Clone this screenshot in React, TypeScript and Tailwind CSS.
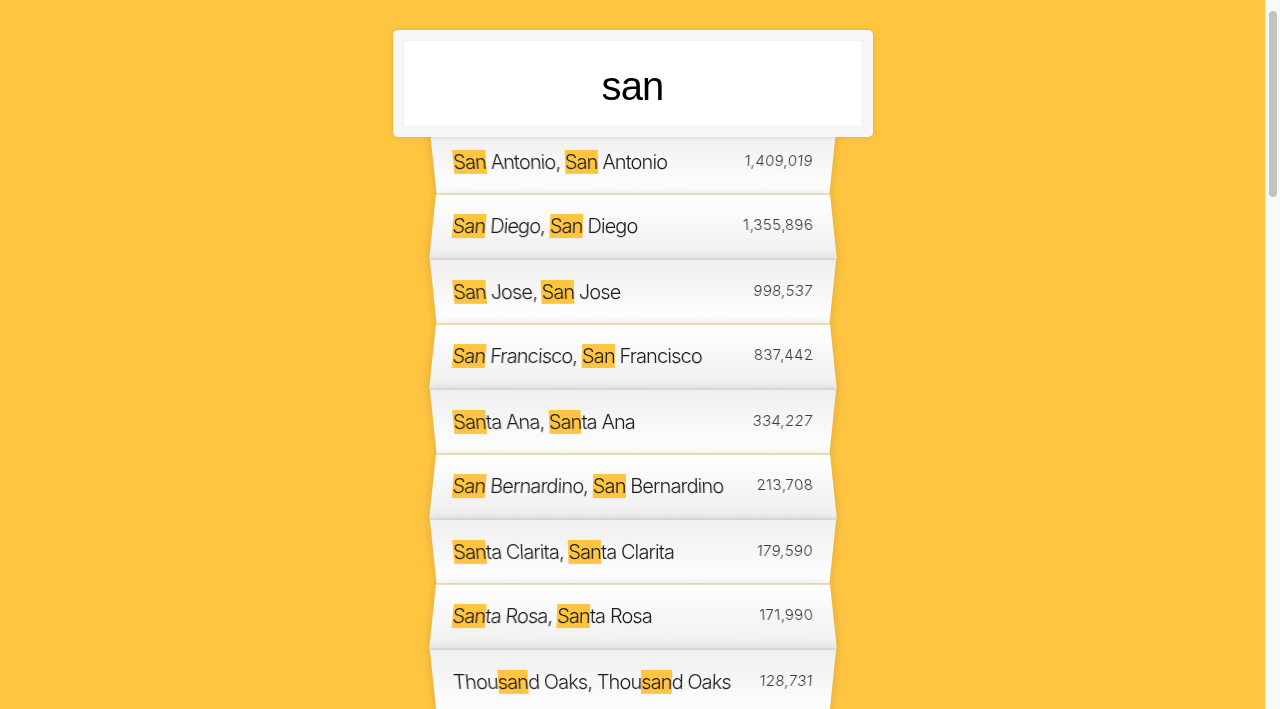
import { Fragment } from "react";

const cities: [string, string][] = [
  ["San Antonio", "1,409,019"],
  ["San Diego", "1,355,896"],
  ["San Jose", "998,537"],
  ["San Francisco", "837,442"],
  ["Santa Ana", "334,227"],
  ["San Bernardino", "213,708"],
  ["Santa Clarita", "179,590"],
  ["Santa Rosa", "171,990"],
  ["Thousand Oaks", "128,731"],
  ["Santa Clara", "120,245"],
  ["Santa Maria", "102,216"],
  ["San Mateo", "101,128"],
];

// wraps every "san" in a highlight span
function Highlight({ text }: { text: string }) {
  const parts = text.split(/(san)/gi);
  return (
    <>
      {parts.map((p, i) =>
        p.toLowerCase() === "san" ? (
          <span key={i} className="bg-[#ffc541]">
            {p}
          </span>
        ) : (
          <Fragment key={i}>{p}</Fragment>
        )
      )}
    </>
  );
}

export default function App() {
  return (
    <div className="flex h-screen overflow-hidden">
      <main className="flex-1 overflow-hidden bg-[#ffc541] font-['Helvetica_Neue',Inter,sans-serif] font-light text-[20px] text-[#1a1a1a]">
        <form className="max-w-[400px] mx-auto pt-[30px] pb-[50px]">
          <input
            type="text"
            readOnly
            value="san"
            className="relative z-10 block w-[480px] -ml-10 -mb-[10px] px-5 pt-[23px] pb-[17px] leading-[47px] text-center text-[40px] font-normal text-black tracking-[-0.02em] font-['Liberation_Sans',Arial,sans-serif] bg-white border-[10px] border-[#f7f7f7] rounded-[5px] outline-none shadow-[0_0_5px_rgba(0,0,0,0.12),inset_0_0_2px_rgba(0,0,0,0.19)]"
          />
          <ul className="relative m-0 p-0">
            {cities.map(([name, pop], i) => (
              <li
                key={name}
                className={`flex justify-between items-start p-5 border-b border-[#d8d8d8] shadow-[0_0_10px_rgba(0,0,0,0.14)] ${
                  i % 2 === 0
                    ? "[transform:perspective(100px)_rotateX(-3deg)_translateY(3px)] bg-[linear-gradient(to_top,#ffffff_0%,#efefef_100%)]"
                    : "[transform:perspective(100px)_rotateX(3deg)_translateY(2px)_scale(1.001)] bg-[linear-gradient(to_bottom,#ffffff_0%,#efefef_100%)]"
                }`}
              >
                <span className="leading-6 tracking-[-0.045em]">
                  <Highlight text={name} />, <Highlight text={name} />
                </span>
                <span className="text-[15px] text-[#3a3a3a] tracking-[0.02em]">{pop}</span>
              </li>
            ))}
          </ul>
        </form>
      </main>
      <aside className="w-[15px] shrink-0 bg-[#f9f9f9] border-l border-[#ececec] pt-[11px] pl-[3px] pr-[3px]">
        <div className="h-[186px] rounded-full bg-[#c2c2c2]" />
      </aside>
    </div>
  );
}
